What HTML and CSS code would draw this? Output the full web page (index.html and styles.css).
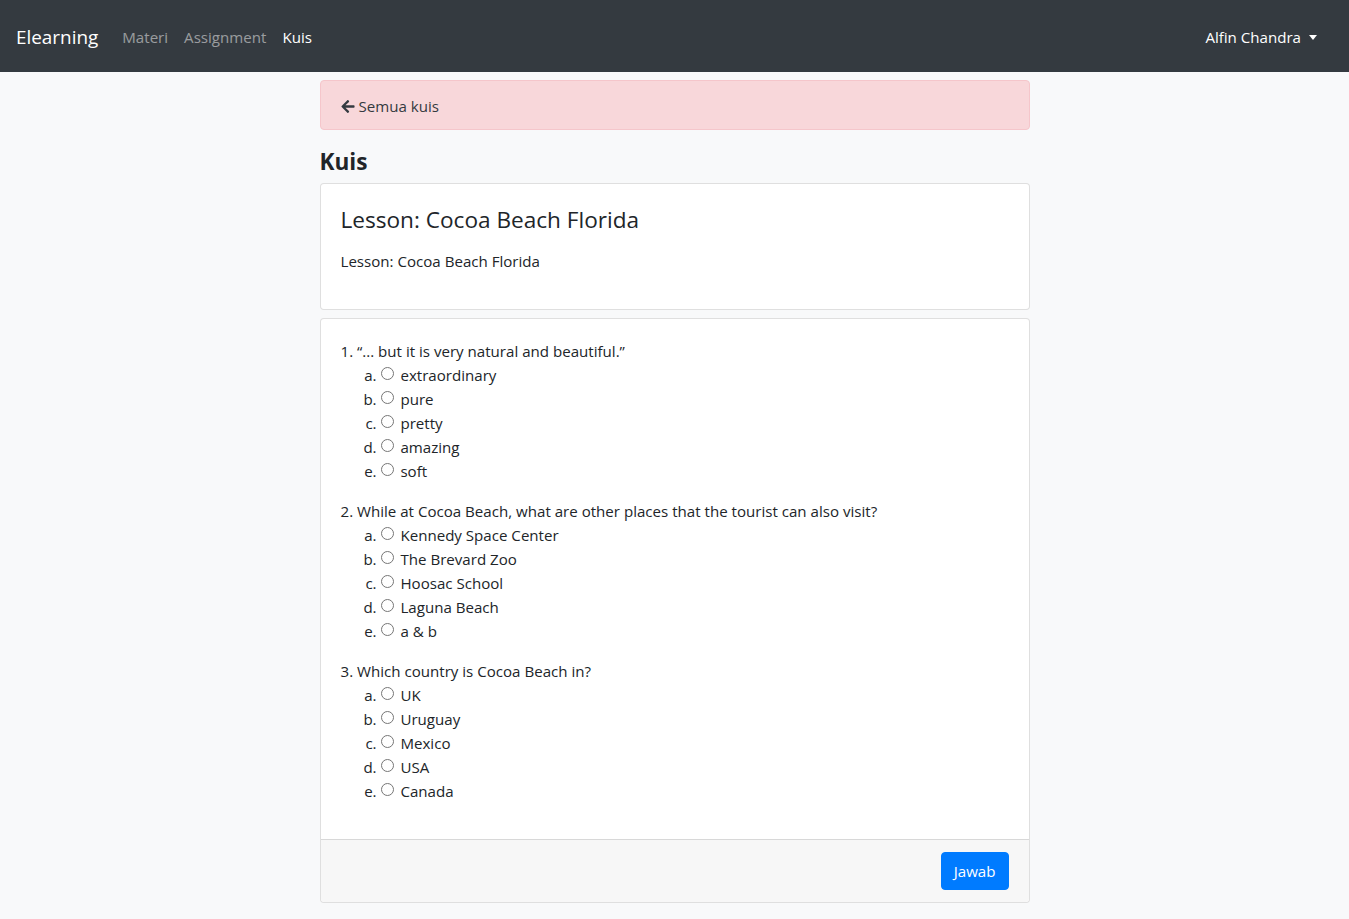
FILE: index.html
```html
<!DOCTYPE html>
<html lang="id">
<head>
<meta charset="utf-8">
<title>Kuis</title>
<link rel="stylesheet" href="styles.css">
</head>
<body>
<nav class="navbar">
  <div class="nav-left">
    <a class="brand" href="#">Elearning</a>
    <a class="nav-link" href="#">Materi</a>
    <a class="nav-link" href="#">Assignment</a>
    <a class="nav-link active" href="#">Kuis</a>
  </div>
  <div class="nav-right">
    <a class="nav-link active dropdown" href="#">Alfin Chandra<span class="caret"></span></a>
  </div>
</nav>
<main class="container">
  <div class="alert">
    <a href="#" class="back"><svg class="arrow" viewBox="0 0 448 512" width="14" height="15"><path fill="currentColor" d="M257.5 445.1l-22.2 22.2c-9.4 9.4-24.6 9.4-33.9 0L7 273c-9.4-9.4-9.4-24.6 0-33.9L201.4 44.7c9.4-9.4 24.6-9.4 33.9 0l22.2 22.2c9.5 9.5 9.3 25-.4 34.3L136.6 216H424c13.3 0 24 10.7 24 24v32c0 13.3-10.7 24-24 24H136.6l120.5 114.8c9.8 9.3 10 24.8.4 34.3z"/></svg>Semua kuis</a>
  </div>
  <h4 class="page-title">Kuis</h4>
  <div class="card">
    <div class="card-body">
      <h3 class="card-title">Lesson: Cocoa Beach Florida</h3>
      <p class="card-text">Lesson: Cocoa Beach Florida</p>
    </div>
  </div>
  <form class="card quiz">
    <div class="card-body">
      <div class="question">
        <div>1. “... but it is very natural and beautiful.”</div>
        <ol class="options">
          <li><input type="radio" name="q1"> extraordinary</li>
          <li><input type="radio" name="q1"> pure</li>
          <li><input type="radio" name="q1"> pretty</li>
          <li><input type="radio" name="q1"> amazing</li>
          <li><input type="radio" name="q1"> soft</li>
        </ol>
      </div>
      <div class="question">
        <div>2. While at Cocoa Beach, what are other places that the tourist can also visit?</div>
        <ol class="options">
          <li><input type="radio" name="q2"> Kennedy Space Center</li>
          <li><input type="radio" name="q2"> The Brevard Zoo</li>
          <li><input type="radio" name="q2"> Hoosac School</li>
          <li><input type="radio" name="q2"> Laguna Beach</li>
          <li><input type="radio" name="q2"> a &amp; b</li>
        </ol>
      </div>
      <div class="question">
        <div>3. Which country is Cocoa Beach in?</div>
        <ol class="options">
          <li><input type="radio" name="q3"> UK</li>
          <li><input type="radio" name="q3"> Uruguay</li>
          <li><input type="radio" name="q3"> Mexico</li>
          <li><input type="radio" name="q3"> USA</li>
          <li><input type="radio" name="q3"> Canada</li>
        </ol>
      </div>
    </div>
    <div class="card-footer">
      <button type="button" class="btn">Jawab</button>
    </div>
  </form>
</main>
</body>
</html>
```
FILE: styles.css
```css
* { box-sizing: border-box; }
body {
  margin: 0;
  background: #f8f9fa;
  color: #212529;
  font-family: "Open Sans", "Noto Sans", sans-serif;
  font-size: 15.1px;
  line-height: 24px;
}
a { text-decoration: none; }
.navbar {
  background: #343a40;
  height: 72px;
  padding: 17px 16px 15px;
  display: flex;
  align-items: center;
  justify-content: space-between;
}
.nav-left { display: flex; align-items: center; }
.brand {
  color: #fff;
  font-size: 18.9px;
  line-height: 30px;
  padding: 5px 0;
  margin-right: 16px;
}
.nav-link {
  color: rgba(255,255,255,.5);
  padding: 8px;
  line-height: 24px;
}
.nav-link.active { color: #fff; }
.nav-right { margin-right: 8px; }
.caret {
  display: inline-block;
  margin-left: 8px;
  vertical-align: 3px;
  border-top: 5px solid #fff;
  border-left: 4px solid transparent;
  border-right: 4px solid transparent;
}
.container {
  width: 710px;
  margin: 8px auto 16px;
}
.alert {
  background: #f8d7da;
  border: 1px solid #f5c6cb;
  border-radius: 4px;
  padding: 13px 20px 11px;
  height: 50px;
  margin-bottom: 16px;
}
.back { color: #343a40; display: block; line-height: 24px; }
.arrow { margin-right: 4px; vertical-align: -2px; }
.page-title {
  margin: 0 0 8px;
  padding-top: 2px;
  font-size: 22.6px;
  line-height: 27px;
  font-weight: 700;
}
.card {
  background: #fff;
  border: 1px solid rgba(0,0,0,.125);
  border-radius: 4px;
  margin-bottom: 8px;
}
.card-body { padding: 20px; }
.card-title {
  margin: 0 0 14px;
  font-size: 22.6px;
  line-height: 31px;
  font-weight: 400;
}
.card-text { margin: 0 0 16px; }
.question { margin-bottom: 16px; }
.options {
  margin: 0;
  padding-left: 40px;
  list-style: lower-alpha;
}
.options input {
  width: 13px;
  height: 13px;
  margin: 4px 3px 0 0;
  vertical-align: top;
}
.card-footer {
  background: #f7f7f7;
  border-top: 1px solid rgba(0,0,0,.125);
  padding: 12px 20px;
  display: flex;
  justify-content: flex-end;
  border-radius: 0 0 4px 4px;
}
.btn {
  background: #007bff;
  color: #fff;
  border: 1px solid #007bff;
  border-radius: 4px;
  font-family: inherit;
  font-size: 15.1px;
  line-height: 24px;
  padding: 6px 12px;
}
```
